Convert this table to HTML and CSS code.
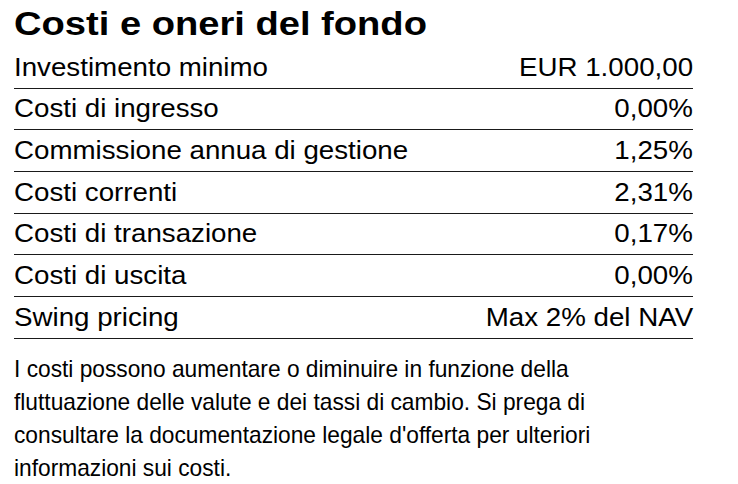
FILE: index.html
```html
<!DOCTYPE html>
<html lang="it">
<head>
<meta charset="utf-8">
<title>Costi e oneri del fondo</title>
<link rel="stylesheet" href="styles.css">
</head>
<body>
<section class="costs">
  <h2 class="costs-title"><span class="title-text">Costi e oneri del fondo</span></h2>
  <div class="costs-table">
    <div class="costs-row"><span class="label">Investimento minimo</span><span class="value">EUR 1.000,00</span></div>
    <div class="costs-row"><span class="label">Costi di ingresso</span><span class="value">0,00%</span></div>
    <div class="costs-row"><span class="label">Commissione annua di gestione</span><span class="value">1,25%</span></div>
    <div class="costs-row"><span class="label">Costi correnti</span><span class="value">2,31%</span></div>
    <div class="costs-row"><span class="label">Costi di transazione</span><span class="value">0,17%</span></div>
    <div class="costs-row"><span class="label">Costi di uscita</span><span class="value">0,00%</span></div>
    <div class="costs-row"><span class="label">Swing pricing</span><span class="value">Max 2% del NAV</span></div>
  </div>
  <p class="costs-note">I costi possono aumentare o diminuire in funzione della fluttuazione delle valute e dei tassi di cambio. Si prega di consultare la documentazione legale d'offerta per ulteriori informazioni sui costi.</p>
</section>
</body>
</html>
```
FILE: styles.css
```css
html, body {
  margin: 0;
  padding: 0;
  background: #fff;
}
body {
  font-family: "Liberation Sans", Arial, sans-serif;
  color: #000;
}
.costs {
  padding: 0 45px 0 14px;
  width: 679px;
}
.costs-title {
  margin: 0;
  font-size: 33px;
  font-weight: bold;
  line-height: 47px;
  height: 47px;
}
.title-text {
  display: inline-block;
  transform: scaleX(1.155);
  transform-origin: left center;
}
.costs-table {
  display: flex;
  flex-direction: column;
}
.costs-row {
  display: flex;
  justify-content: space-between;
  align-items: center;
  height: 40.67px;
  border-bottom: 1px solid #1a1a1a;
  font-size: 25px;
}
.label,
.value {
  display: inline-block;
  transform: scaleX(1.108);
}
.label {
  transform-origin: left center;
}
.value {
  transform-origin: right center;
}
.costs-note {
  margin: 13px 0 0;
  width: 620px;
  font-size: 24px;
  line-height: 33.3px;
  transform: scaleX(0.947);
  transform-origin: left top;
}
```
